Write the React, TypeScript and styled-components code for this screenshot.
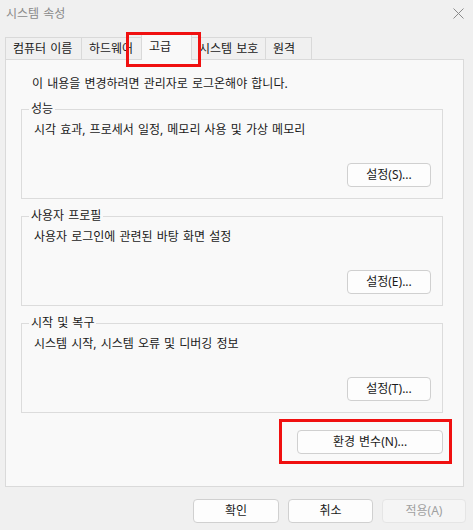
import styled, { createGlobalStyle } from 'styled-components';

const GlobalStyle = createGlobalStyle`
  html, body {
    margin: 0;
    padding: 0;
    background: #f0f0f0;
  }
  body {
    font-family: "Noto Sans", "Noto Sans CJK KR", sans-serif;
    font-size: 12px;
    word-spacing: 1px;
    color: #1a1a1a;
  }
`;

const Window = styled.div`
  width: 473px;
  height: 530px;
  background: #f0f0f0;
  display: flex;
  flex-direction: column;
  overflow: hidden;
`;

const TitleBar = styled.div`
  height: 26px;
  display: flex;
  align-items: center;
  justify-content: space-between;
  padding: 0 9px 0 6px;
  color: #8a8a8a;
  font-size: 12px;
`;

const TabStrip = styled.div`
  margin-top: 7px;
  height: 26px;
  padding-left: 5px;
  display: flex;
  align-items: flex-end;
  position: relative;
  z-index: 1;
`;

const Tab = styled.div<{ $w: number; $active?: boolean }>`
  position: relative;
  box-sizing: border-box;
  width: ${p => p.$w}px;
  height: ${p => (p.$active ? 27 : 22)}px;
  margin-bottom: ${p => (p.$active ? -1 : 0)}px;
  margin-left: -1px;
  padding: ${p => (p.$active ? '5px' : '3px')} 0 0 7px;
  display: flex;
  align-items: flex-start;
  border: 1px solid #d9d9d9;
  border-bottom: none;
  background: ${p => (p.$active ? '#f9f9f9' : '#f0f0f0')};
  line-height: 16px;
  white-space: nowrap;

  &:first-child {
    margin-left: 0;
  }
`;

const Highlight = styled.div<{ $l: number; $t: number; $w: number; $h: number }>`
  position: absolute;
  left: ${p => p.$l}px;
  top: ${p => p.$t}px;
  width: ${p => p.$w}px;
  height: ${p => p.$h}px;
  box-sizing: border-box;
  border: 3px solid #f01010;
  pointer-events: none;
  z-index: 5;
`;

const Panel = styled.div`
  box-sizing: border-box;
  height: 428px;
  margin: 0 9px 0 5px;
  border: 1px solid #dadada;
  background: #f9f9f9;
  padding: 16px 20px 0 15px;
  display: flex;
  flex-direction: column;
`;

const Notice = styled.div`
  line-height: 16px;
  padding-left: 11px;
  margin-bottom: 9px;
`;

const Groups = styled.div`
  display: flex;
  flex-direction: column;
  gap: 9px;
`;

const Group = styled.fieldset`
  margin: 0;
  padding: 0;
  min-width: 0;
  border: 1px solid #dcdcdc;
`;

const Legend = styled.legend`
  margin-left: 7px;
  padding: 0 2px;
  line-height: 16px;
`;

const GroupBody = styled.div`
  padding: 5px 11px 11px 12px;
  display: flex;
  flex-direction: column;
`;

const Desc = styled.div`
  line-height: 16px;
`;

const ButtonRow = styled.div<{ $gap?: number }>`
  display: flex;
  justify-content: flex-end;
  margin-top: ${p => p.$gap ?? 25}px;
`;

const Button = styled.button<{ $w: number }>`
  position: relative;
  box-sizing: border-box;
  width: ${p => p.$w}px;
  height: 24px;
  padding: 0;
  border: 1px solid #d0d0d0;
  border-radius: 4px;
  background: #fdfdfd;
  color: #1a1a1a;
  font-family: inherit;
  font-size: 12px;
  word-spacing: 1px;
  line-height: 16px;

  &:disabled {
    color: #a0a0a0;
    border-color: #e5e5e5;
    background: #f5f5f5;
  }
`;

const Footer = styled.div`
  display: flex;
  justify-content: flex-end;
  gap: 9px;
  padding: 12px 7px 0 0;
`;

const CloseIcon = () => (
  <svg width="11" height="11" viewBox="0 0 11 11">
    <path d="M0.5 0.5L10.5 10.5M10.5 0.5L0.5 10.5" stroke="#8a8a8a" strokeWidth="1" />
  </svg>
);

const tabs = [
  { label: '컴퓨터 이름', w: 77 },
  { label: '하드웨어', w: 61 },
  { label: '고급', w: 51, active: true },
  { label: '시스템 보호', w: 75 },
  { label: '원격', w: 47 },
];

const groups = [
  { title: '성능', desc: '시각 효과, 프로세서 일정, 메모리 사용 및 가상 메모리', button: '설정(S)...' },
  { title: '사용자 프로필', desc: '사용자 로그인에 관련된 바탕 화면 설정', button: '설정(E)...' },
  { title: '시작 및 복구', desc: '시스템 시작, 시스템 오류 및 디버깅 정보', button: '설정(T)...' },
];

export default function App() {
  return (
    <>
      <GlobalStyle />
      <Window>
        <TitleBar>
          <span>시스템 속성</span>
          <CloseIcon />
        </TitleBar>

        <TabStrip>
          {tabs.map(t => (
            <Tab key={t.label} $w={t.w} $active={t.active}>
              {t.label}
              {t.active && <Highlight $l={-16} $t={-2} $w={75} $h={35} />}
            </Tab>
          ))}
        </TabStrip>

        <Panel>
          <Notice>이 내용을 변경하려면 관리자로 로그온해야 합니다.</Notice>
          <Groups>
            {groups.map(g => (
              <Group key={g.title}>
                <Legend>{g.title}</Legend>
                <GroupBody>
                  <Desc>{g.desc}</Desc>
                  <ButtonRow>
                    <Button $w={84}>{g.button}</Button>
                  </ButtonRow>
                </GroupBody>
              </Group>
            ))}
          </Groups>
          <ButtonRow $gap={17}>
            <Button $w={146}>
              환경 변수(N)...
              <Highlight $l={-19} $t={-12} $w={173} $h={45} />
            </Button>
          </ButtonRow>
        </Panel>

        <Footer>
          <Button $w={86}>확인</Button>
          <Button $w={85}>취소</Button>
          <Button $w={84} disabled>적용(A)</Button>
        </Footer>
      </Window>
    </>
  );
}
